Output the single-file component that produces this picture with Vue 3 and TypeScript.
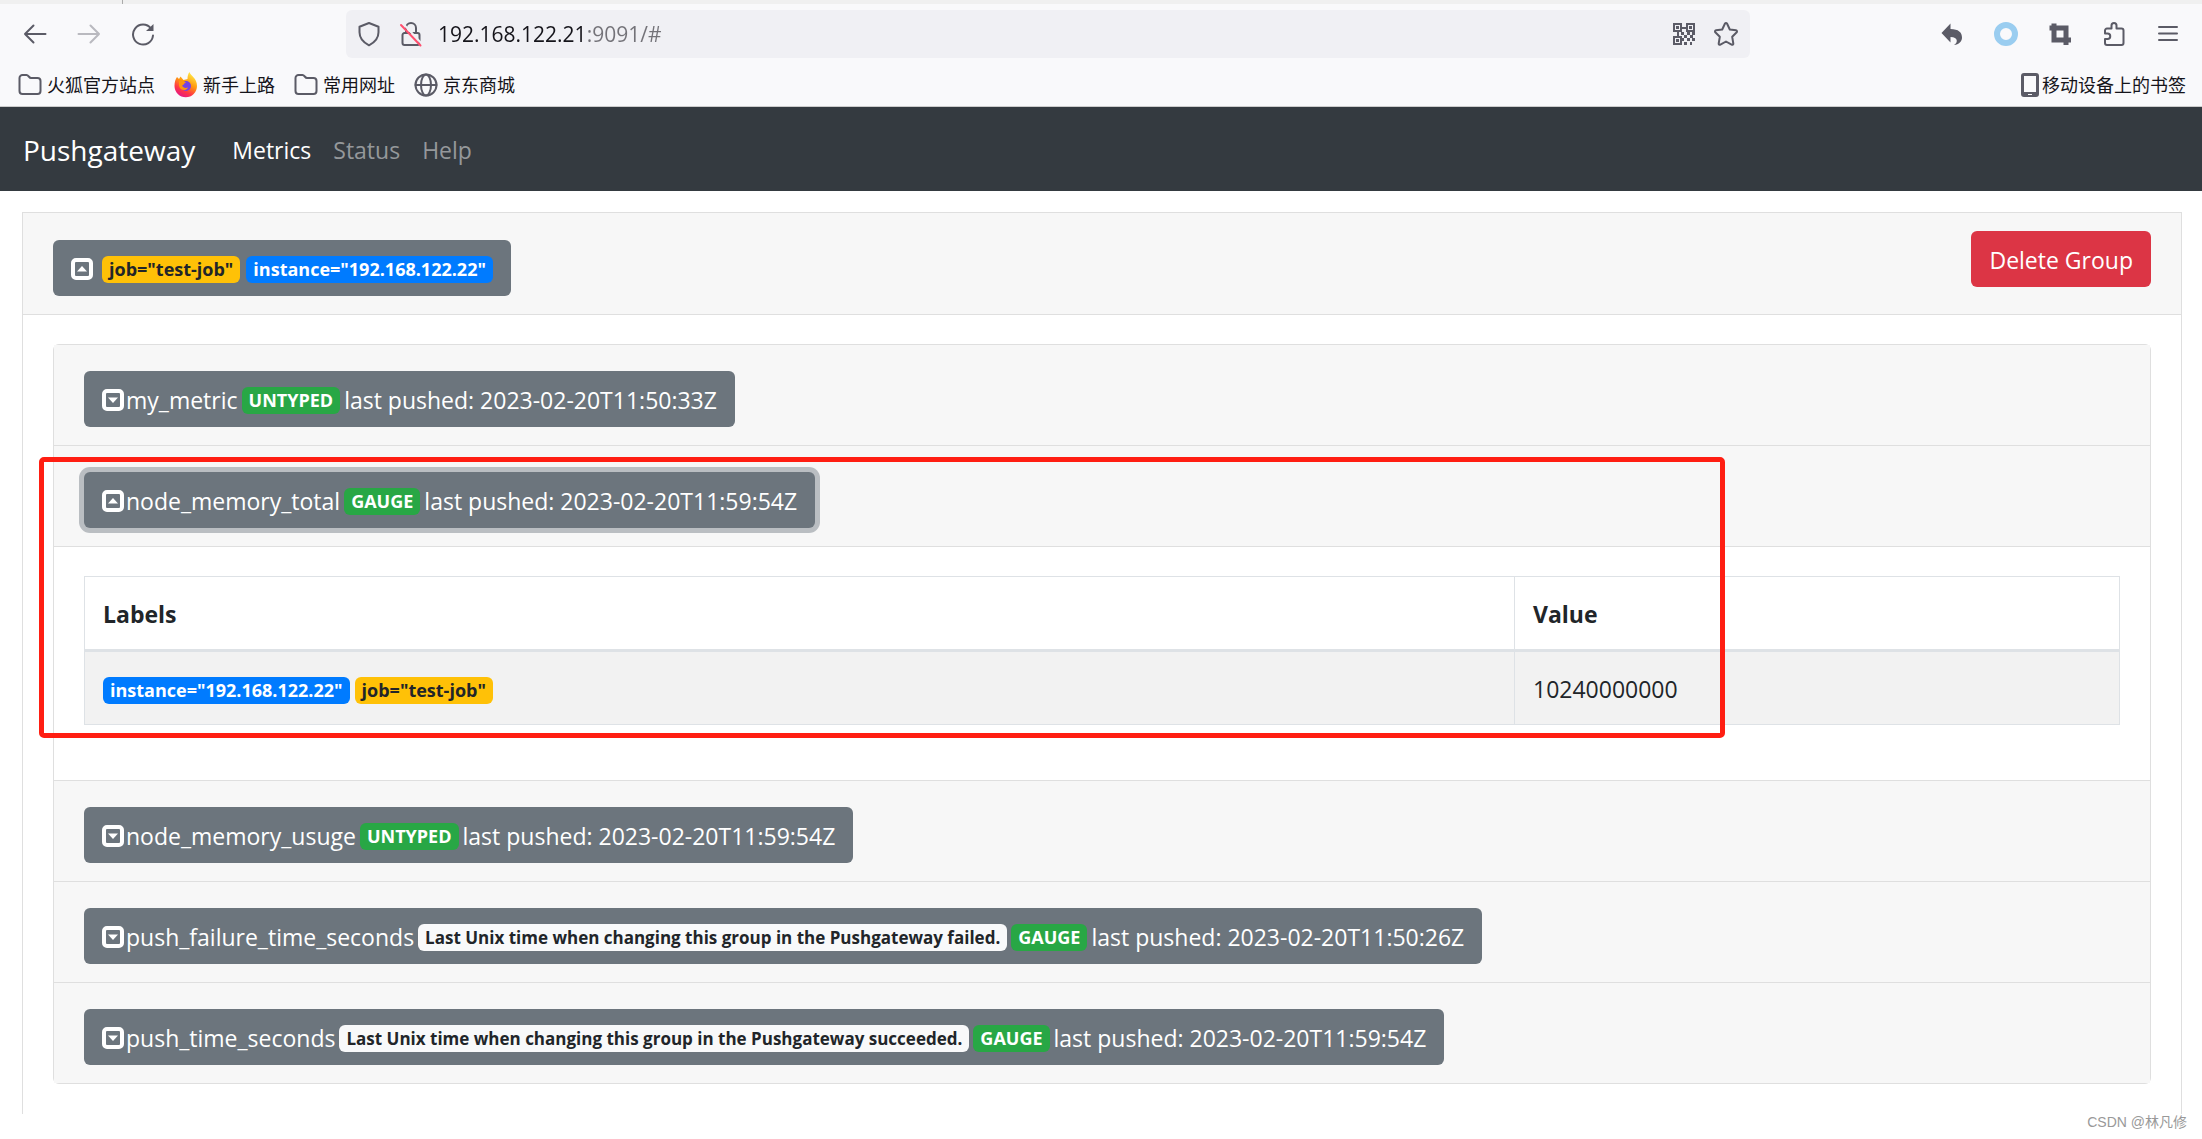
<script setup lang="ts">
import { ref } from 'vue'

interface Metric {
  name: string
  help?: string
  type: string
  pushed: string
  open: boolean
}

const address = ref('192.168.122.21:9091/#')

const metrics = ref<Metric[]>([
  { name: 'my_metric', type: 'UNTYPED', pushed: '2023-02-20T11:50:33Z', open: false },
  { name: 'node_memory_total', type: 'GAUGE', pushed: '2023-02-20T11:59:54Z', open: true },
  { name: 'node_memory_usuge', type: 'UNTYPED', pushed: '2023-02-20T11:59:54Z', open: false },
  {
    name: 'push_failure_time_seconds',
    help: 'Last Unix time when changing this group in the Pushgateway failed.',
    type: 'GAUGE',
    pushed: '2023-02-20T11:50:26Z',
    open: false,
  },
  {
    name: 'push_time_seconds',
    help: 'Last Unix time when changing this group in the Pushgateway succeeded.',
    type: 'GAUGE',
    pushed: '2023-02-20T11:59:54Z',
    open: false,
  },
])
</script>

<template>
  <div class="browser">
    <div class="tabstrip"><span class="tab-edge"></span></div>
    <div class="toolbar">
      <div class="nav-buttons">
        <button class="tool" aria-label="Back">
          <svg width="24" height="24" viewBox="0 0 24 24"><path d="M22.500 12H2M10.500 3.500L2 12l8.500 8.500" /></svg>
        </button>
        <button class="tool faded" aria-label="Forward">
          <svg width="24" height="24" viewBox="0 0 24 24"><path d="M1.500 12H22M13.500 3.500L22 12l-8.500 8.500" /></svg>
        </button>
        <button class="tool" aria-label="Reload">
          <svg width="24" height="24" viewBox="0 0 24 24"><path d="M20 6.500A10 10 0 1 0 22 13.500" /><path class="solid" d="M22.500 2v7h-7.500z" /></svg>
        </button>
      </div>
      <div class="urlbar">
        <svg width="24" height="26" viewBox="0 0 24 26"><path d="M12 2l9.500 3.800v5.500c0 6-3.500 10-9.500 13-6-3-9.500-7-9.500-13V5.800z" /></svg>
        <svg class="lock" width="24" height="26" viewBox="0 0 24 26"><path d="M7 12V7a5 5 0 0 1 10 0v5M5.500 12h13a2 2 0 0 1 2 2v8a2 2 0 0 1-2 2h-13a2 2 0 0 1-2-2v-8a2 2 0 0 1 2-2z" /><path class="halo" d="M3.500 2L23 23" /><path class="strike" d="M2 4l19.500 20.500" /></svg>
        <input v-model="address" class="address" aria-label="Address" />
        <button class="tool" aria-label="QR code">
          <svg width="24" height="24" viewBox="0 0 24 24">
            <path class="square" d="M2 2h7v7H2zM15 2h7v7h-7zM2 15h7v7H2z" />
            <path class="solid" d="M4 4h3v3H4zM17 4h3v3h-3zM4 17h3v3H4zM9 5h6v2H9zM5 9h2v6H5zM9 10h3v3H9zM15 10h3v3h-3zM20 10h3v3h-3zM12 13h3v3h-3zM18 13h3v3h-3zM10 16h2v3h-2zM15 16h3v3h-3zM20 16h3v3h-3zM12 20h3v3h-3zM18 20h2v3h-2z" />
          </svg>
        </button>
        <button class="tool" aria-label="Bookmark this page">
          <svg width="26" height="26" viewBox="0 0 26 26"><path d="M12 2.500a1.200 1.200 0 0 1 2 0l2.800 6 6.200.8a1.200 1.200 0 0 1 .7 2l-4.500 4.500 1.100 6.700a1.200 1.200 0 0 1-1.700 1.200L13 20.500l-5.600 3.200a1.200 1.200 0 0 1-1.700-1.200l1.100-6.700-4.500-4.500a1.200 1.200 0 0 1 .7-2l6.200-.8z" /></svg>
        </button>
      </div>
      <div class="extensions">
        <button class="tool" aria-label="Undo close tab">
          <svg width="24" height="24" viewBox="0 0 24 24"><path class="solid" d="M10.500 1.500v5.500c8 0 11.500 3.500 11.500 8.500 0 4-3 7-8 7.500 4-2 4.500-8-3.500-8v5.500L1.500 11z" /></svg>
        </button>
        <button class="tool" aria-label="Ring extension">
          <svg width="24" height="24" viewBox="0 0 24 24"><circle class="ring" cx="12" cy="12" r="9" /></svg>
        </button>
        <button class="tool" aria-label="Screenshot">
          <svg width="24" height="24" viewBox="0 0 24 24"><path class="crop" d="M1.500 6H18v17M6 1.500V18h17" /></svg>
        </button>
        <button class="tool" aria-label="Extensions">
          <svg width="24" height="26" viewBox="0 0 24 26"><path d="M9.500 7.500V4.500a2.500 2.500 0 0 1 5 0V7.500h5a2 2 0 0 1 2 2v12.500a2 2 0 0 1-2 2H5a2 2 0 0 1-2-2v-4h2.500a2.700 2.700 0 0 0 0-5.500H3V9.500a2 2 0 0 1 2-2z" /></svg>
        </button>
        <button class="tool" aria-label="Menu">
          <svg width="24" height="24" viewBox="0 0 24 24"><path d="M3 5h18M3 11.500h18M3 18h18" /></svg>
        </button>
      </div>
    </div>
    <div class="bookmarks">
      <a href="#" class="bookmark">
        <svg width="24" height="24" viewBox="0 0 24 24"><path d="M1.500 5a3 3 0 0 1 3-3h4c2 0 2.500 3 4.500 3h6.500a3 3 0 0 1 3 3v10a3 3 0 0 1-3 3h-15a3 3 0 0 1-3-3z" /></svg>
        <span>火狐官方站点</span>
      </a>
      <a href="#" class="bookmark">
        <svg width="24" height="26" viewBox="0 0 24 26">
          <defs>
            <linearGradient id="flame" x1="0.800" y1="0" x2="0.300" y2="1"><stop offset="0" stop-color="#fff44f" /><stop offset="0.450" stop-color="#ff980e" /><stop offset="0.750" stop-color="#ff3647" /><stop offset="1" stop-color="#e31587" /></linearGradient>
          </defs>
          <path fill="url(#flame)" stroke="none" d="M15.500 0c1 4 7.500 6 7.500 14a11 11 0 0 1-22.500 0c0-4 1-7 2.500-9l2 2 1.500-2.500 3 3.500 4-1c0-3 .5-5 2-7z" />
          <circle cx="12" cy="14" r="5" fill="#7542e5" stroke="none" />
          <path fill="#ff980e" stroke="none" d="M5 9c3-1 5 0 7 1.500-2 .5-2 2.500-4 3 1 2 3 3 6 2-2 4-8 3.500-9-2z" />
        </svg>
        <span>新手上路</span>
      </a>
      <a href="#" class="bookmark">
        <svg width="24" height="24" viewBox="0 0 24 24"><path d="M1.500 5a3 3 0 0 1 3-3h4c2 0 2.500 3 4.500 3h6.500a3 3 0 0 1 3 3v10a3 3 0 0 1-3 3h-15a3 3 0 0 1-3-3z" /></svg>
        <span>常用网址</span>
      </a>
      <a href="#" class="bookmark">
        <svg width="24" height="24" viewBox="0 0 24 24"><circle cx="12" cy="12" r="10.500" /><ellipse cx="12" cy="12" rx="5" ry="10.500" /><path d="M1.500 12h21" /></svg>
        <span>京东商城</span>
      </a>
      <a href="#" class="bookmark mobile">
        <svg width="18" height="24" viewBox="0 0 18 24"><path class="solid" fill-rule="evenodd" d="M3 0h12a3 3 0 0 1 3 3v18a3 3 0 0 1-3 3H3a3 3 0 0 1-3-3V3a3 3 0 0 1 3-3zM3 3v16h12V3zM7 21v1h4v-1z" /></svg>
        <span>移动设备上的书签</span>
      </a>
    </div>
  </div>

  <nav class="navbar">
    <a href="#" class="brand">Pushgateway</a>
    <a href="#" class="nav-link active">Metrics</a>
    <a href="#" class="nav-link">Status</a>
    <a href="#" class="nav-link">Help</a>
  </nav>

  <main class="content">
    <section class="group">
      <header class="group-header">
        <button class="btn toggle group-toggle">
          <svg class="caret" width="22" height="22" viewBox="0 0 22 22"><rect x="2" y="2" width="18" height="18" rx="3" /><path d="M6 13.500h10L11 8z" /></svg>
          <span class="badge warning">job="test-job"</span>
          <span class="badge primary">instance="192.168.122.22"</span>
        </button>
        <button class="btn danger">Delete Group</button>
      </header>
      <div class="group-body">
        <div class="metrics">
          <article v-for="m in metrics" :key="m.name" class="metric">
            <header class="metric-header">
              <button class="btn toggle" :class="{ focused: m.open }" :aria-expanded="m.open">
                <svg class="caret" width="22" height="22" viewBox="0 0 22 22"><rect x="2" y="2" width="18" height="18" rx="3" /><path :d="m.open ? 'M6 13.500h10L11 8z' : 'M6 8.500h10L11 14z'" /></svg>
                <span class="name">{{ m.name }}</span>
                <span v-if="m.help" class="badge light">{{ m.help }}</span>
                <span class="badge success">{{ m.type }}</span>
                <span>last pushed: {{ m.pushed }}</span>
              </button>
            </header>
            <div v-if="m.open" class="metric-body">
              <table>
                <colgroup><col /><col class="value-col" /></colgroup>
                <thead>
                  <tr><th scope="col">Labels</th><th scope="col">Value</th></tr>
                </thead>
                <tbody>
                  <tr>
                    <td>
                      <div class="labels">
                        <span class="badge primary">instance="192.168.122.22"</span>
                        <span class="badge warning">job="test-job"</span>
                      </div>
                    </td>
                    <td>10240000000</td>
                  </tr>
                </tbody>
              </table>
            </div>
            <div v-if="m.open" class="highlight"></div>
          </article>
        </div>
      </div>
    </section>
    <span class="watermark">CSDN @林凡修</span>
  </main>
</template>

<style>
body {
  margin: 0;
  background: #fff;
  color: #212529;
  font-family: "Open Sans", "Noto Sans", "Noto Sans CJK SC", sans-serif;
  font-size: 23px;
  line-height: 36px;
}
</style>

<style scoped>
* {
  box-sizing: border-box;
}
a {
  text-decoration: none;
  color: inherit;
}
button {
  font: inherit;
  border: 0;
  margin: 0;
}
svg {
  display: block;
  flex: none;
}
.browser {
  background: #f9f9fb;
  border-bottom: 1px solid #ccc;
}
.browser svg {
  fill: none;
  stroke: #5b5b66;
  stroke-width: 2;
  stroke-linecap: round;
  stroke-linejoin: round;
}
.browser svg .solid {
  fill: #5b5b66;
  stroke: none;
}
.tabstrip {
  height: 4px;
  background: #f0f0f0;
}
.tab-edge {
  display: block;
  width: 123px;
  height: 4px;
  border-right: 1px solid #aaa;
}
.toolbar {
  display: flex;
  align-items: center;
  height: 60px;
  padding: 0 22px 0 23px;
}
.nav-buttons {
  display: flex;
  gap: 30px;
  width: 323px;
}
.tool {
  display: flex;
  padding: 0;
  background: none;
}
.faded {
  opacity: 0.4;
}
.urlbar {
  display: flex;
  align-items: center;
  flex: 1;
  height: 48px;
  padding: 0 11px;
  border-radius: 6px;
  background: #f0f0f4;
}
.lock {
  margin-left: 18px;
}
.urlbar .strike {
  stroke: #ff4f6e;
}
.urlbar .halo {
  stroke: #f0f0f4;
}
.address {
  flex: 1;
  min-width: 0;
  height: 40px;
  margin-left: 15px;
  padding: 0;
  border: 0;
  outline: 0;
  font: inherit;
  font-size: 21px;
  color: transparent;
  caret-color: #15141a;
  background: linear-gradient(90deg, #15141a 149px, #737278 149px) text;
}
.urlbar .tool + .tool {
  margin-left: 17px;
}
.extensions {
  display: flex;
  align-items: center;
  justify-content: space-between;
  width: 240px;
  margin: 0 0 0 190px;
}
.browser svg .square {
  stroke-linejoin: miter;
}
.browser svg .ring {
  stroke: #9acdf0;
  stroke-width: 6;
}
.browser svg .crop {
  stroke-width: 5;
  stroke-linecap: butt;
  stroke-linejoin: miter;
}
.bookmarks {
  display: flex;
  align-items: center;
  gap: 19px;
  height: 42px;
  padding: 0 16px 0 18px;
  font-family: "Noto Sans CJK SC", sans-serif;
  font-size: 18px;
  line-height: 24px;
  color: #15141a;
}
.bookmark {
  display: flex;
  align-items: center;
  gap: 5px;
}
.bookmark span {
  padding-bottom: 2px;
}
.mobile {
  gap: 3px;
  margin-left: auto;
}
.navbar {
  display: flex;
  align-items: center;
  height: 84px;
  padding: 1px 23px 0;
  background: #343a40;
  color: #95989b;
}
.brand {
  margin-right: 37px;
  font-size: 28px;
  color: #fff;
}
.nav-link {
  margin-right: 22px;
}
.active {
  color: #fff;
}
.content {
  position: relative;
  padding: 21px 20px 25px 22px;
}
.group {
  border: 1px solid #dfdfdf;
  border-bottom: 0;
}
.group-header {
  display: flex;
  justify-content: space-between;
  align-items: flex-start;
  padding: 18px 30px;
  border-bottom: 1px solid #dfdfdf;
  background: #f7f7f7;
}
.btn {
  display: flex;
  align-items: center;
  height: 56px;
  padding: 2px 18px 0;
  border-radius: 6px;
  color: #fff;
  white-space: nowrap;
}
.danger {
  background: #dc3545;
}
.toggle {
  gap: 4px;
  background: #6c757d;
}
.group-toggle {
  gap: 6px;
  margin-top: 9px;
}
.group-toggle .caret {
  margin-right: 3px;
}
.focused {
  box-shadow: 0 0 0 5px #babec2;
}
.caret {
  fill: #fff;
}
.caret rect {
  fill: none;
  stroke: #fff;
  stroke-width: 4;
}
.name {
  margin-left: -2px;
}
.badge {
  display: block;
  height: 27px;
  padding: 0 7px;
  border-radius: 6px;
  font-size: 18px;
  font-weight: 700;
  line-height: 27px;
  white-space: nowrap;
}
.btn .badge {
  margin-top: 1px;
}
.primary {
  background: #007bff;
  color: #fff;
}
.warning {
  background: #ffc107;
  color: #212529;
}
.success {
  background: #28a745;
  color: #fff;
}
.light {
  background: #f8f9fa;
  color: #212529;
  font-size: 17px;
}
.group-body {
  padding: 29px 30px 30px;
}
.metrics {
  border: 1px solid #dfdfdf;
  border-radius: 6px;
}
.metric {
  position: relative;
  border-bottom: 1px solid #dfdfdf;
}
.metric:last-child {
  border-bottom: 0;
}
.metric-header {
  display: flex;
  padding: 26px 30px 18px;
  background: #f7f7f7;
}
.metric-body {
  padding: 29px 30px 55px;
  border-top: 1px solid #dfdfdf;
}
table {
  width: 100%;
  table-layout: fixed;
  border-collapse: collapse;
}
.value-col {
  width: 605px;
}
th,
td {
  height: 74px;
  padding: 2px 18px 0;
  border: 1px solid #dee2e6;
  text-align: left;
}
th {
  border-bottom-width: 3px;
}
tbody tr {
  background: #f2f2f2;
}
.labels {
  display: flex;
  gap: 5px;
  padding-top: 2px;
}
.highlight {
  position: absolute;
  inset: 11px 425px 42px -15px;
  border: 5px solid #ff1e12;
  border-radius: 5px;
  pointer-events: none;
}
.watermark {
  position: absolute;
  right: 15px;
  bottom: 5px;
  font-family: "Liberation Sans", "Noto Sans CJK SC", sans-serif;
  font-size: 14px;
  line-height: 24px;
  color: #999;
}
</style>
